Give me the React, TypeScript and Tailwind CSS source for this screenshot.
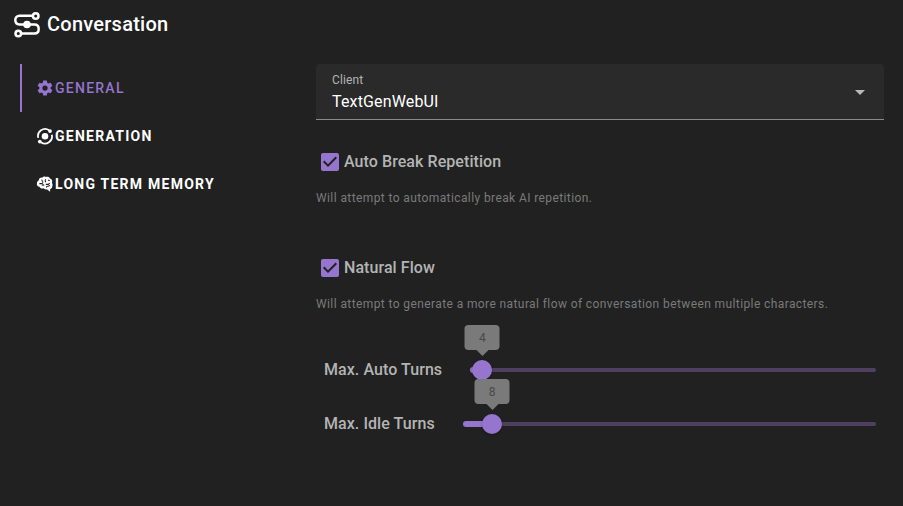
import React from "react";

const COG =
  "M12,15.5A3.5,3.5 0 0,1 8.5,12A3.5,3.5 0 0,1 12,8.5A3.5,3.5 0 0,1 15.5,12A3.5,3.5 0 0,1 12,15.5M19.43,12.97C19.47,12.65 19.5,12.33 19.5,12C19.5,11.67 19.47,11.34 19.43,11L21.54,9.37C21.73,9.22 21.78,8.95 21.66,8.73L19.66,5.27C19.54,5.05 19.27,4.96 19.05,5.05L16.56,6.05C16.04,5.66 15.5,5.32 14.87,5.07L14.5,2.42C14.46,2.18 14.25,2 14,2H10C9.75,2 9.54,2.18 9.5,2.42L9.13,5.07C8.5,5.32 7.96,5.66 7.44,6.05L4.95,5.05C4.73,4.96 4.46,5.05 4.34,5.27L2.34,8.73C2.21,8.95 2.27,9.22 2.46,9.37L4.57,11C4.53,11.34 4.5,11.67 4.5,12C4.5,12.33 4.53,12.65 4.57,12.97L2.46,14.63C2.27,14.78 2.21,15.05 2.34,15.27L4.34,18.73C4.46,18.95 4.73,19.03 4.95,18.95L7.44,17.94C7.96,18.34 8.5,18.68 9.13,18.93L9.5,21.58C9.54,21.82 9.75,22 10,22H14C14.25,22 14.46,21.82 14.5,21.58L14.87,18.93C15.5,18.67 16.04,18.34 16.56,17.94L19.05,18.95C19.27,19.03 19.54,18.95 19.66,18.73L21.66,15.27C21.78,15.05 21.73,14.78 21.54,14.63L19.43,12.97Z";

function RouteIcon() {
  return (
    <svg viewBox="0 0 30 30" className="size-[30px]" fill="none" stroke="currentColor" strokeWidth="2.5">
      <path d="M21 6.8H7.5C4.7 6.8 3.3 8.6 3.3 11.1S4.7 15.5 7.5 15.5H22.5C25.3 15.5 26.7 17.3 26.7 20S25.3 24.5 22.5 24.5H9" />
      <circle cx="23.7" cy="7" r="2.8" />
      <circle cx="6.3" cy="24.5" r="2.8" />
      <circle cx="15" cy="15.5" r="3.8" fill="currentColor" stroke="none" />
    </svg>
  );
}

function CogIcon() {
  return (
    <svg viewBox="0 0 24 24" className="size-[18px]" fill="currentColor">
      <path d={COG} />
    </svg>
  );
}

function OrbitIcon() {
  return (
    <svg viewBox="0 0 24 24" className="size-[18px]" fill="none" stroke="currentColor" strokeWidth="2.3">
      <circle cx="12" cy="12.4" r="4.4" fill="currentColor" stroke="none" />
      <path d="M17.5 4.4A9.4 9.4 0 0 0 3 14.5M6.5 20.4A9.4 9.4 0 0 0 21 10.3" />
      <circle cx="18.7" cy="5.4" r="2.5" fill="currentColor" stroke="none" />
      <circle cx="5.1" cy="19.4" r="2.5" fill="currentColor" stroke="none" />
    </svg>
  );
}

function BrainIcon() {
  return (
    <svg viewBox="0 0 24 24" className="size-[18px]" fill="currentColor">
      <path d="M21.3 10.5C22.3 12 22.4 13.6 21.7 15C21.7 17 20.2 18.4 18.8 19V22.3L14.5 19C13 19.6 11 19.1 10 17.8C7.6 18.6 5.2 17.6 4.6 15.6C2.2 15.4 .8 13.4 1.2 11.2C1.2 9.2 2.2 7.8 3.6 7.2C3.8 4.8 6 3.1 8.3 3.5C9.5 2 11.7 1.7 13.2 2.7C15.2 1.7 17.8 2.6 18.6 4.5C20.8 5 22 7 21.6 9Z" />
      <path
        d="M4.5 11.5H8L9.5 9.8M7.8 6.2C7.6 7.4 8.5 8.4 9.6 8.4M13 5.8C11.7 7 12 9 13.5 9.5M7.8 14C8.8 12.8 10.2 13 11 14M13 12.5H16.5L18.2 10.8M16 6.8L18.2 7.8M14 16.5C14 15.2 14.8 14.7 16 15L18.8 14"
        fill="none"
        stroke="#212121"
        strokeWidth="1.4"
      />
    </svg>
  );
}

function Tab({ icon, label, active }: { icon: React.ReactNode; label: string; active?: boolean }) {
  return (
    <div
      className={
        active
          ? "flex h-12 items-center border-l-2 border-[#9575cd] pl-[14px] text-[#9575cd]"
          : "flex h-12 items-center border-l-2 border-transparent pl-[14px] text-white"
      }
    >
      {icon}
      <span
        className={
          active
            ? "ml-px text-[14px] font-medium tracking-[1.25px]"
            : "ml-px text-[14px] font-bold tracking-[1.25px]"
        }
      >
        {label}
      </span>
    </div>
  );
}

function Option({ label, hint }: { label: string; hint: string }) {
  return (
    <div className="h-[106px]">
      <div className="flex h-10 items-center pl-[2px]">
        <svg viewBox="0 0 24 24" className="size-6" fill="#9575cd">
          <path d="M10,17L5,12L6.41,10.58L10,14.17L17.59,6.58L19,8M19,3H5C3.89,3 3,3.89 3,5V19A2,2 0 0,0 5,21H19A2,2 0 0,0 21,19V5C21,3.89 20.1,3 19,3Z" />
        </svg>
        <span className="ml-[2px] text-[16px] font-medium tracking-[0.07px] text-[#b4b4b4]">{label}</span>
      </div>
      <p className="mt-[8px] text-[12px] leading-4 tracking-[0.4px] text-[#7a7a7a]">{hint}</p>
    </div>
  );
}

function Slider({ label, value, percent, start }: { label: string; value: number; percent: number; start: string }) {
  return (
    <div className="flex h-[54px] items-center pl-2 pr-2">
      <span className={start + " shrink-0 text-[16px] font-medium tracking-[0.07px] text-[#b4b4b4]"}>{label}</span>
      <div className="relative flex h-1 grow items-center rounded-full bg-[#4f4061]">
        <div className="h-1.5 shrink-0 rounded-full bg-[#9575cd]" style={{ width: percent + "%" }} />
        <div
          className="absolute top-[-8px] -ml-[10px] size-5 rounded-full bg-[#9575cd] shadow-[0_1px_3px_rgba(0,0,0,0.3)]"
          style={{ left: percent + "%" }}
        >
          <div className="absolute bottom-[30px] left-1/2 flex h-[25px] w-[35px] -translate-x-1/2 items-center justify-center rounded-[4px] bg-[#7a7a7a] text-[12px] text-[#494949]">
            {value}
            <div className="absolute left-1/2 top-full -translate-x-1/2 border-x-[6px] border-t-[6px] border-x-transparent border-t-[#7a7a7a]" />
          </div>
        </div>
      </div>
    </div>
  );
}

export default function App() {
  return (
    <main className="h-[506px] w-[903px] overflow-hidden bg-[#212121] font-['Roboto',sans-serif]">
      <header className="flex h-12 items-center pl-3 text-white">
        <RouteIcon />
        <h1 className="ml-[5px] text-[20px] font-medium tracking-[0.25px]">Conversation</h1>
      </header>
      <div className="flex pt-4">
        <nav className="w-[296px] pl-5">
          <Tab active icon={<CogIcon />} label="GENERAL" />
          <Tab icon={<OrbitIcon />} label="GENERATION" />
          <Tab icon={<BrainIcon />} label="LONG TERM MEMORY" />
        </nav>
        <section className="ml-5 w-[568px]">
          <div className="flex h-14 items-center justify-between rounded-t-[4px] border-b border-[#8a8a8a] bg-[#2a2a2a] pl-4 pr-3">
            <div>
              <div className="pt-[3px] text-[12px] leading-4 tracking-[0.1px] text-[#b4b4b4]">Client</div>
              <div className="pt-[2px] text-[16px] leading-6 tracking-[0.15px] text-white">TextGenWebUI</div>
            </div>
            <svg viewBox="0 0 24 24" className="size-6" fill="#bababa">
              <path d="M7,10L12,15L17,10H7Z" />
            </svg>
          </div>
          <div className="pt-[22px]">
            <Option label="Auto Break Repetition" hint="Will attempt to automatically break AI repetition." />
            <Option
              label="Natural Flow"
              hint="Will attempt to generate a more natural flow of conversation between multiple characters."
            />
          </div>
          <div className="-mt-[11px]">
            <Slider label="Max. Auto Turns" value={4} percent={3.03} start="w-[146px]" />
            <Slider label="Max. Idle Turns" value={8} percent={7.07} start="w-[139px]" />
          </div>
        </section>
      </div>
    </main>
  );
}
